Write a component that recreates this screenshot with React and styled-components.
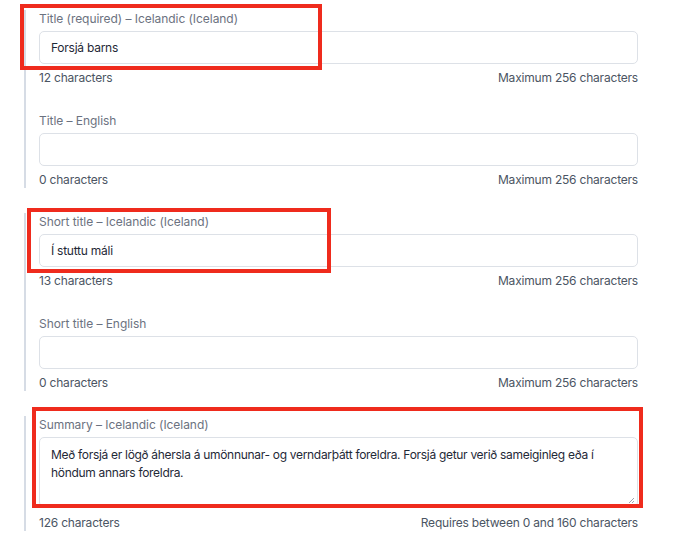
import React from "react";
import styled, { createGlobalStyle } from "styled-components";

const Global = createGlobalStyle`
  html, body { margin: 0; padding: 0; background: #ffffff; }
  body { font-family: Inter, "Noto Sans", "Liberation Sans", sans-serif; -webkit-font-smoothing: antialiased; }
  * { box-sizing: border-box; }
`;

const Page = styled.div`
  width: 679px;
  padding: 10px 41px 0 24px;
  display: flex;
  flex-direction: column;
  gap: 25px;
`;

const Group = styled.section`
  border-left: 2px solid #d6dce5;
  padding-left: 13px;
  display: flex;
  flex-direction: column;
  gap: 26px;
`;

const Field = styled.div`
  position: relative;
  display: flex;
  flex-direction: column;
`;

const Label = styled.label`
  font-size: 12px;
  line-height: 18px;
  letter-spacing: -0.05px;
  color: #6b7280;
  margin-bottom: 3px;
`;

const Input = styled.div`
  height: 33px;
  border: 1px solid #dde1e7;
  border-radius: 5px;
  background: #fff;
  padding: 0 11px;
  display: flex;
  align-items: center;
  font-size: 12px;
  letter-spacing: -0.25px;
  color: #1f2937;
`;

const TextArea = styled.div`
  position: relative;
  height: 70px;
  border: 1px solid #dde1e7;
  border-radius: 5px;
  background: #fff;
  padding: 8px 11px;
  font-size: 12px;
  line-height: 18px;
  letter-spacing: -0.3px;
  color: #1f2937;
`;

const Grip = styled.svg`
  position: absolute;
  right: 2px;
  bottom: 2px;
`;

const Helper = styled.div`
  margin-top: ${(p) => p.$gap || 6}px;
  display: flex;
  justify-content: space-between;
  font-size: 12px;
  line-height: 16px;
  letter-spacing: -0.2px;
  color: #4b5563;
`;

const Highlight = styled.div`
  position: absolute;
  border: 4px solid #ef2b1d;
  pointer-events: none;
  top: ${(p) => p.$top}px;
  left: ${(p) => p.$left}px;
  width: ${(p) => p.$w}px;
  height: ${(p) => p.$h}px;
`;

function TextField({ label, value, count, limit, box }) {
  return (
    <Field>
      <Label>{label}</Label>
      <Input>{value}</Input>
      <Helper>
        <span>{count} characters</span>
        <span>{limit}</span>
      </Helper>
      {box && <Highlight $top={box[0]} $left={box[1]} $w={box[2]} $h={box[3]} />}
    </Field>
  );
}

export default function App() {
  return (
    <>
      <Global />
      <Page>
        <Group>
          <TextField
            label="Title (required) – Icelandic (Iceland)"
            value="Forsjá barns"
            count={12}
            limit="Maximum 256 characters"
            box={[-6, -19, 302, 66]}
          />
          <TextField label="Title – English" value="" count={0} limit="Maximum 256 characters" />
        </Group>
        <Group>
          <TextField
            label="Short title – Icelandic (Iceland)"
            value="Í stuttu máli"
            count={13}
            limit="Maximum 256 characters"
            box={[-5, -12, 304, 65]}
          />
          <TextField label="Short title – English" value="" count={0} limit="Maximum 256 characters" />
        </Group>
        <Group>
          <Field>
            <Label>Summary – Icelandic (Iceland)</Label>
            <TextArea>
              Með forsjá er lögð áhersla á umönnunar- og verndarþátt foreldra. Forsjá getur verið sameiginleg eða í
              höndum annars foreldra.
              <Grip width="7" height="7" viewBox="0 0 7 7">
                <path d="M6 1 L1 6 M6 4 L4 6" stroke="#9ca3af" strokeWidth="1" />
              </Grip>
            </TextArea>
            <Helper $gap={8}>
              <span>126 characters</span>
              <span>Requires between 0 and 160 characters</span>
            </Helper>
            <Highlight $top={-9} $left={-7} $w={611} $h={101} />
          </Field>
        </Group>
      </Page>
    </>
  );
}
